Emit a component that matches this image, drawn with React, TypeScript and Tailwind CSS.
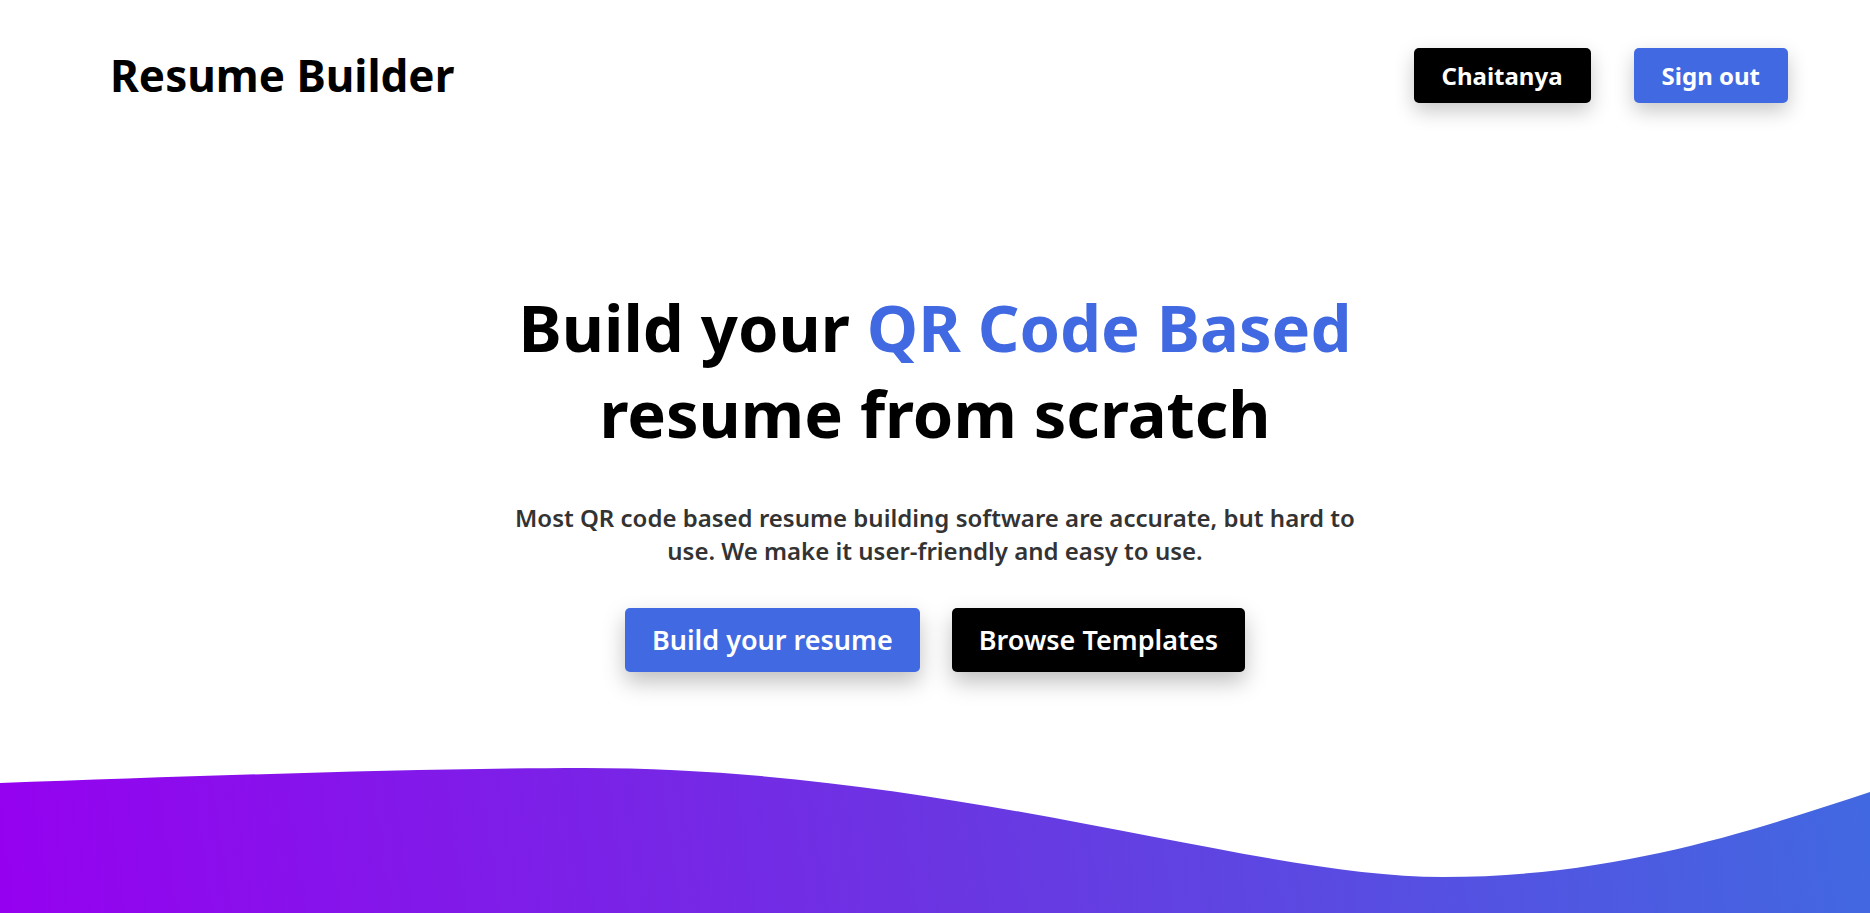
import React from "react";

export default function App() {
  return (
    <div className="h-screen w-full bg-white flex flex-col overflow-hidden font-['Noto_Sans',sans-serif]">
      <header className="flex items-center justify-between pt-[45px] pl-[110px] pr-[82px]">
        <h1 className="text-[44px] leading-[60px] font-bold text-black">Resume Builder</h1>
        <div className="flex items-center gap-[43px]">
          <button className="bg-black text-white text-[24px] leading-[33px] font-bold py-[11px] px-[28px] rounded-[5px] shadow-[0_8px_20px_rgba(0,0,0,0.22)]">
            Chaitanya
          </button>
          <button className="bg-[#4169e1] text-white text-[24px] leading-[33px] font-bold py-[11px] px-[28px] rounded-[5px] shadow-[0_8px_20px_rgba(0,0,0,0.22)]">
            Sign out
          </button>
        </div>
      </header>

      <main className="flex flex-col items-center mt-[179px]">
        <h2 className="text-[65px] leading-[86px] font-bold text-black text-center">
          Build your <span className="text-[#4169e1]">QR Code Based</span>
          <br />
          resume from scratch
        </h2>
        <p className="mt-[45px] w-[880px] text-center text-[24px] leading-[33px] font-semibold text-[#333333]">
          Most QR code based resume building software are accurate, but hard to use. We make it user-friendly and easy to use.
        </p>
        <div className="mt-[41px] flex items-center gap-8">
          <button className="bg-[#4169e1] text-white text-[27px] leading-[36px] font-semibold py-[14px] px-[27px] rounded-[5px] shadow-[0_10px_22px_rgba(0,0,0,0.25)]">
            Build your resume
          </button>
          <button className="bg-black text-white text-[27px] leading-[36px] font-semibold py-[14px] px-[27px] rounded-[5px] shadow-[0_10px_22px_rgba(0,0,0,0.25)]">
            Browse Templates
          </button>
        </div>
      </main>

      <div className="mt-auto w-full h-[145px]">
        <svg className="block w-full h-full" viewBox="0 0 1870 145" preserveAspectRatio="none">
          <defs>
            <linearGradient id="waveGrad" gradientUnits="userSpaceOnUse" x1="0" y1="220" x2="1870" y2="-60">
              <stop offset="0" stopColor="#9600f0" />
              <stop offset="0.5" stopColor="#6b35e2" />
              <stop offset="1" stopColor="#4169e1" />
            </linearGradient>
          </defs>
          <path
            d="M0,15 C200,8 420,0 584,0 C950,0 1250,109 1443,109 C1620,109 1760,60 1870,24 L1870,145 L0,145 Z"
            fill="url(#waveGrad)"
          />
        </svg>
      </div>
    </div>
  );
}
